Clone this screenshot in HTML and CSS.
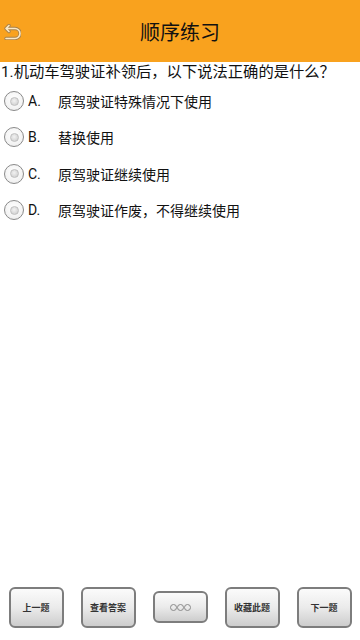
FILE: index.html
```html
<!DOCTYPE html>
<html lang="zh">
<head>
<meta charset="utf-8">
<meta name="viewport" content="width=360, initial-scale=1">
<link rel="stylesheet" href="styles.css">
<title>顺序练习</title>
</head>
<body>
<div class="app">
  <header class="topbar">
    <span class="back">
      <svg width="18" height="16" viewBox="0 0 18 16">
        <path d="M3 4.5 H12 A5 5 0 0 1 12 14.5 H3 M6 1.5 L3 4.5 L6 7.5" fill="none" stroke="#a9824a" stroke-width="3.4" stroke-linecap="round" stroke-linejoin="round"/>
        <path d="M3 4.5 H12 A5 5 0 0 1 12 14.5 H3 M6 1.5 L3 4.5 L6 7.5" fill="none" stroke="#fbe8c4" stroke-width="1.6" stroke-linecap="round" stroke-linejoin="round"/>
      </svg>
    </span>
    <h1 class="title">顺序练习</h1>
  </header>

  <main class="content">
    <p class="question">1.机动车驾驶证补领后，以下说法正确的是什么？</p>
    <ul class="options">
      <li class="option"><span class="radio"></span><span class="letter">A.</span><span class="text">原驾驶证特殊情况下使用</span></li>
      <li class="option"><span class="radio"></span><span class="letter">B.</span><span class="text">替换使用</span></li>
      <li class="option"><span class="radio"></span><span class="letter">C.</span><span class="text">原驾驶证继续使用</span></li>
      <li class="option"><span class="radio"></span><span class="letter">D.</span><span class="text">原驾驶证作废，不得继续使用</span></li>
    </ul>
  </main>

  <footer class="toolbar">
    <div class="cell"><button class="btn">上一题</button></div>
    <div class="cell"><button class="btn">查看答案</button></div>
    <div class="cell"><button class="btn btn-small"><span class="dots"><i></i><i></i><i></i></span></button></div>
    <div class="cell"><button class="btn">收藏此题</button></div>
    <div class="cell"><button class="btn">下一题</button></div>
  </footer>
</div>
</body>
</html>
```

FILE: styles.css
```css
* { box-sizing: border-box; }
html, body { margin: 0; padding: 0; }
body {
  width: 360px;
  height: 640px;
  background: #ffffff;
  font-family: Roboto, "Noto Sans CJK SC", sans-serif;
  color: #111;
  overflow: hidden;
}
.app {
  display: flex;
  flex-direction: column;
  height: 640px;
}
.topbar {
  position: relative;
  height: 62px;
  background: #f9a21e;
  display: flex;
  align-items: center;
  justify-content: center;
  flex: none;
}
.back {
  position: absolute;
  left: 3px;
  top: 24px;
  width: 18px;
  height: 16px;
  display: block;
}
.back svg { display: block; }
.title {
  margin: 0;
  font-family: "Noto Sans CJK SC", sans-serif;
  font-weight: 400;
  font-size: 20px;
  color: #111;
  line-height: 1;
  transform: translateY(1px);
}
.content {
  flex: 1;
}
.question {
  margin: 0;
  padding: 0 0 0 1px;
  height: 21px;
  line-height: 21px;
  font-size: 15.3px;
  white-space: nowrap;
  color: #111;
}
.options {
  list-style: none;
  margin: 0;
  padding: 0;
}
.option {
  height: 36.3px;
  display: flex;
  align-items: center;
  font-size: 14px;
  color: #111;
}
.radio {
  width: 20px;
  height: 20px;
  margin-left: 4px;
  border-radius: 50%;
  border: 1px solid #8a8a8a;
  background: radial-gradient(circle at 50% 40%, #ffffff 0%, #f4f4f4 60%, #e6e6e6 100%);
  display: flex;
  align-items: center;
  justify-content: center;
  flex: none;
}
.radio::after {
  content: "";
  width: 7px;
  height: 7px;
  border-radius: 50%;
  background: radial-gradient(circle at 45% 40%, #f2f2f2, #c9c9c9);
  border: 1px solid #c0c0c0;
}
.letter {
  width: 34px;
  padding-left: 4px;
  flex: none;
}
.text {
  font-family: "Noto Sans CJK SC", sans-serif;
}
.toolbar {
  flex: none;
  height: 62px;
  display: grid;
  grid-template-columns: repeat(5, 72px);
  align-items: center;
  padding-bottom: 11px;
  padding-top: 7px;
}
.cell {
  display: flex;
  justify-content: center;
  align-items: center;
}
.btn {
  width: 55px;
  height: 41px;
  margin: 0;
  padding: 0;
  border: 2px solid #7d7d7d;
  border-radius: 6px;
  background: linear-gradient(#fbfbfb 0%, #ebebeb 50%, #cdcdcd 100%);
  font-family: "Noto Sans CJK SC", sans-serif;
  font-size: 9px;
  font-weight: 700;
  color: #333;
  display: flex;
  align-items: center;
  justify-content: center;
}
.btn-small {
  height: 32px;
}
.dots {
  display: flex;
  gap: 0;
}
.dots i {
  width: 7px;
  height: 7px;
  border: 1px solid #8a8a8a;
  border-radius: 50%;
  display: block;
}
```
